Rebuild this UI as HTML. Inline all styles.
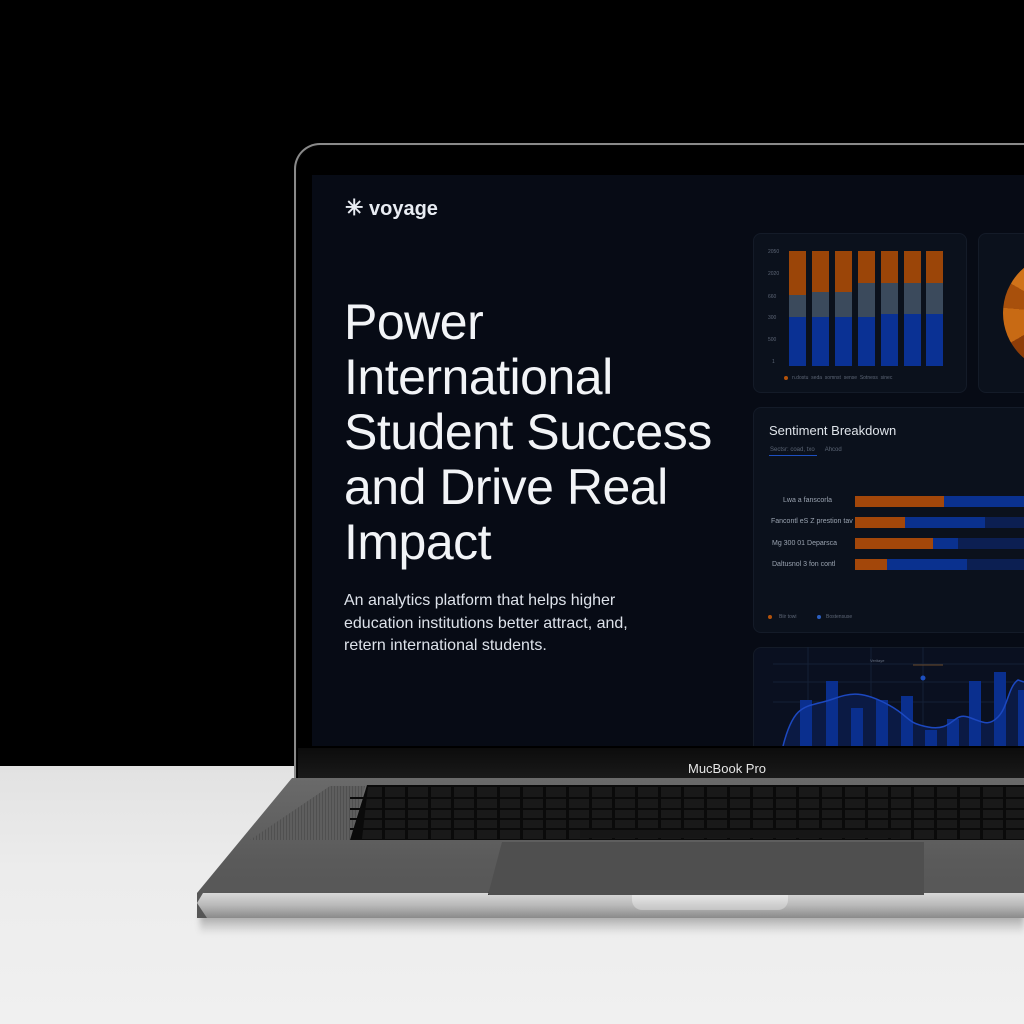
<!DOCTYPE html>
<html><head><meta charset="utf-8"><style>
*{margin:0;padding:0;box-sizing:border-box}
body{width:1024px;height:1024px;overflow:hidden;background:#000;position:relative;font-family:"Liberation Sans",sans-serif}
.a{position:absolute}
.card{position:absolute;background:#0b111c;border:1px solid #141b28;border-radius:8px}
.t{color:#5d6676;font-size:5px;white-space:nowrap}
</style></head><body>
<!-- floor -->
<div class="a" style="left:0;top:766px;width:1024px;height:258px;background:linear-gradient(#e2e2e2,#ececec 40%,#f0f0f0)"></div>
<div class="a" style="left:200px;top:912px;width:824px;height:22px;background:linear-gradient(rgba(0,0,0,.35),rgba(0,0,0,0));filter:blur(3px)"></div>
<!-- lid -->
<div class="a" style="left:294px;top:143px;width:760px;height:640px;border-radius:26px 26px 0 0;background:#050505;border:2px solid #8a8a8a;border-bottom:none"></div>
<div class="a" style="left:297px;top:146px;width:760px;height:636px;border-radius:24px 24px 0 0;background:#000"></div>
<div class="a" style="left:298px;top:748px;width:726px;height:32px;background:linear-gradient(#0c0c0c,#1a1a1a)"></div>
<div class="a" style="left:688px;top:761px;color:#e6e6e6;font-size:13px">MucBook Pro</div>
<!-- screen -->
<div class="a" style="left:312px;top:175px;width:712px;height:571px;background:#070b15;overflow:hidden">
 <div class="a" style="left:33px;top:20px;color:#e8ecf2;font-size:20px;font-weight:bold"><span style="font-size:22px">✳</span> voyage</div>
 <div class="a" style="left:32px;top:120px;color:#f2f4f7;font-size:50px;line-height:55px;width:440px;letter-spacing:-0.5px;white-space:nowrap">Power<br>International<br>Student Success<br>and Drive Real<br>Impact</div>
 <div class="a" style="left:32px;top:415px;color:#dde2ea;font-size:16px;line-height:22.5px;width:320px">An analytics platform that helps higher education institutions better attract, and, retern international students.</div>

 <div class="card" style="left:441px;top:58px;width:214px;height:160px"></div>
 <div class="card" style="left:666px;top:58px;width:100px;height:160px;overflow:hidden">
  <div class="a" style="left:24px;top:20px;width:118px;height:118px;border-radius:50%;background:conic-gradient(#a64d0a 0 30deg,#c4650f 30deg 195deg,#bbb 195deg 215deg,#8e3d08 215deg 240deg,#c86a14 240deg 275deg,#a8500c 275deg 300deg,#d0731a 300deg)"></div>
 </div>
 <div class="card" style="left:441px;top:232px;width:290px;height:226px"></div>
 <div class="card" style="left:441px;top:472px;width:290px;height:120px;background:#0a1020"></div>
</div>
<!-- bar chart 1 -->
<div class="a" style="left:0;top:0">
<div class="a" style="left:789px;top:251px;width:17px;height:44px;background:#9b4508"></div><div class="a" style="left:789px;top:295px;width:17px;height:22px;background:#3b4a5c"></div><div class="a" style="left:789px;top:317px;width:17px;height:49px;background:#0a3194"></div>
<div class="a" style="left:812px;top:251px;width:17px;height:41px;background:#9b4508"></div><div class="a" style="left:812px;top:292px;width:17px;height:25px;background:#3b4a5c"></div><div class="a" style="left:812px;top:317px;width:17px;height:49px;background:#0a3194"></div>
<div class="a" style="left:835px;top:251px;width:17px;height:41px;background:#9b4508"></div><div class="a" style="left:835px;top:292px;width:17px;height:25px;background:#3b4a5c"></div><div class="a" style="left:835px;top:317px;width:17px;height:49px;background:#0a3194"></div>
<div class="a" style="left:858px;top:251px;width:17px;height:32px;background:#9b4508"></div><div class="a" style="left:858px;top:283px;width:17px;height:34px;background:#3b4a5c"></div><div class="a" style="left:858px;top:317px;width:17px;height:49px;background:#0a3194"></div>
<div class="a" style="left:881px;top:251px;width:17px;height:32px;background:#9b4508"></div><div class="a" style="left:881px;top:283px;width:17px;height:31px;background:#3b4a5c"></div><div class="a" style="left:881px;top:314px;width:17px;height:52px;background:#0a3194"></div>
<div class="a" style="left:904px;top:251px;width:17px;height:32px;background:#9b4508"></div><div class="a" style="left:904px;top:283px;width:17px;height:31px;background:#3b4a5c"></div><div class="a" style="left:904px;top:314px;width:17px;height:52px;background:#0a3194"></div>
<div class="a" style="left:926px;top:251px;width:17px;height:32px;background:#9b4508"></div><div class="a" style="left:926px;top:283px;width:17px;height:31px;background:#3b4a5c"></div><div class="a" style="left:926px;top:314px;width:17px;height:52px;background:#0a3194"></div>
<div class="t a" style="left:768px;top:249px">2050</div><div class="t a" style="left:768px;top:271px">2020</div><div class="t a" style="left:768px;top:294px">660</div><div class="t a" style="left:768px;top:315px">300</div><div class="t a" style="left:768px;top:337px">500</div><div class="t a" style="left:772px;top:359px">1</div>
<div class="a" style="left:784px;top:376px;width:4px;height:4px;border-radius:50%;background:#b3520a"></div>
<div class="t a" style="left:792px;top:375px">n.dostu &nbsp;seda &nbsp;somnst &nbsp;sense &nbsp;Sotness &nbsp;sinec</div>
</div>
<!-- sentiment -->
<div class="a" style="left:769px;top:423px;color:#dfe4ea;font-size:13px">Sentiment Breakdown</div>
<div class="t a" style="left:770px;top:447px;font-size:6px">Sectsr: coad, txo &nbsp;&nbsp;&nbsp;&nbsp;&nbsp;Ahcod</div>
<div class="a" style="left:769px;top:455px;width:48px;height:1px;background:#1d4fc0"></div>
<div class="t a" style="left:783px;top:497px;font-size:7px;color:#9aa3b0">Lwa a fanscorla</div>
<div class="t a" style="left:771px;top:518px;font-size:7px;color:#9aa3b0">Fancontl eS Z prestion tav</div>
<div class="t a" style="left:772px;top:540px;font-size:7px;color:#9aa3b0">Mg 300 01 Deparsca</div>
<div class="t a" style="left:772px;top:561px;font-size:7px;color:#9aa3b0">Daltusnol 3 fon contl</div>
<div class="a" style="left:855px;top:496px;width:169px;height:11px;background:#0a318f"></div><div class="a" style="left:855px;top:496px;width:89px;height:11px;background:#a3470a"></div>
<div class="a" style="left:855px;top:517px;width:169px;height:11px;background:#0c1f52"></div><div class="a" style="left:855px;top:517px;width:130px;height:11px;background:#0a318f"></div><div class="a" style="left:855px;top:517px;width:50px;height:11px;background:#a3470a"></div>
<div class="a" style="left:855px;top:538px;width:169px;height:11px;background:#0c1f52"></div><div class="a" style="left:855px;top:538px;width:103px;height:11px;background:#0a318f"></div><div class="a" style="left:855px;top:538px;width:78px;height:11px;background:#a3470a"></div>
<div class="a" style="left:855px;top:559px;width:169px;height:11px;background:#0c1f52"></div><div class="a" style="left:855px;top:559px;width:112px;height:11px;background:#0a318f"></div><div class="a" style="left:855px;top:559px;width:32px;height:11px;background:#a3470a"></div>
<div class="a" style="left:768px;top:615px;width:4px;height:4px;border-radius:50%;background:#b3520a"></div><div class="t a" style="left:779px;top:614px">Biir towi</div>
<div class="a" style="left:817px;top:615px;width:4px;height:4px;border-radius:50%;background:#2b5fc0"></div><div class="t a" style="left:826px;top:614px">Bostensuse</div>
<!-- bottom chart -->
<svg class="a" style="left:753px;top:647px" width="271" height="99">
 <g stroke="#142036" stroke-width="1"><line x1="20" y1="17" x2="271" y2="17"/><line x1="20" y1="35" x2="271" y2="35"/><line x1="20" y1="55" x2="271" y2="55"/><line x1="55" y1="0" x2="55" y2="99"/><line x1="118" y1="0" x2="118" y2="99"/><line x1="170" y1="0" x2="170" y2="99"/></g>
 <path d="M30 99 C40 60 50 60 70 55 S100 40 130 55 S150 75 175 80 S200 65 215 70 S235 80 245 70 S255 40 265 33 L271 35 L271 99Z" fill="#0b1a44"/>
 <g fill="#0a2f8e"><rect x="47" y="53" width="12" height="46"/><rect x="73" y="34" width="12" height="65"/><rect x="98" y="61" width="12" height="38"/><rect x="123" y="53" width="12" height="46"/><rect x="148" y="49" width="12" height="50"/><rect x="172" y="83" width="12" height="16"/><rect x="194" y="72" width="12" height="27"/><rect x="216" y="34" width="12" height="65"/><rect x="241" y="25" width="12" height="74"/><rect x="265" y="43" width="12" height="56"/></g>
 <path d="M30 99 C40 60 50 60 70 55 S100 40 130 55 S150 75 175 80 S200 65 215 70 S235 80 245 70 S255 40 265 33 L271 35" fill="none" stroke="#1c48c0" stroke-width="1.5"/>
 <line x1="160" y1="18" x2="190" y2="18" stroke="#8a5a2a" stroke-width="0.8"/>
 <circle cx="170" cy="31" r="2.5" fill="#1d4fc0"/>
 <text x="117" y="15" fill="#6a7384" font-size="4" font-family="Liberation Sans">Veritaye</text>
</svg>
<!-- base -->
<div class="a" style="left:197px;top:778px;width:827px;height:140px;background:linear-gradient(#6a6a6a,#5a5a5a 60%,#555);clip-path:polygon(95px 0,827px 0,827px 140px,0 140px,0 115px)"></div>
<div class="a" style="left:197px;top:893px;width:827px;height:25px;background:linear-gradient(#d8d8d8,#b8b8b8 50%,#8a8a8a);clip-path:polygon(6px 0,827px 0,827px 25px,10px 25px,0 10px)"></div>
<div class="a" style="left:632px;top:895px;width:156px;height:15px;border-radius:0 0 10px 10px;background:linear-gradient(#e6e6e6,#c4c4c4)"></div>
<!-- speaker -->
<div class="a" style="left:250px;top:786px;width:115px;height:54px;background:repeating-linear-gradient(90deg,#505050 0 1px,#5e5e5e 1px 3px);clip-path:polygon(80px 0,115px 0,100px 54px,0 54px)"></div>
<!-- keyboard -->
<div class="a" style="left:350px;top:785px;width:674px;height:55px;background:#0a0a0a;clip-path:polygon(17px 0,674px 0,674px 55px,0 55px)"></div>
<div class="a" style="left:362px;top:787px;width:662px;height:52px;background:repeating-linear-gradient(90deg,#191919 0 20px,#0a0a0a 20px 23px);clip-path:polygon(6px 0,662px 0,662px 52px,0 52px)"></div>
<div class="a" style="left:350px;top:797px;width:674px;height:2px;background:#0a0a0a"></div>
<div class="a" style="left:350px;top:808px;width:674px;height:2px;background:#0a0a0a"></div>
<div class="a" style="left:350px;top:818px;width:674px;height:2px;background:#0a0a0a"></div>
<div class="a" style="left:350px;top:828px;width:674px;height:2px;background:#0a0a0a"></div>
<div class="a" style="left:580px;top:830px;width:320px;height:8px;background:#161616"></div>
<!-- trackpad -->
<div class="a" style="left:488px;top:842px;width:436px;height:53px;background:#4f4f4f;border-left:1px solid #2a2a2a;clip-path:polygon(14px 0,436px 0,436px 53px,0 53px)"></div>
</body></html>
